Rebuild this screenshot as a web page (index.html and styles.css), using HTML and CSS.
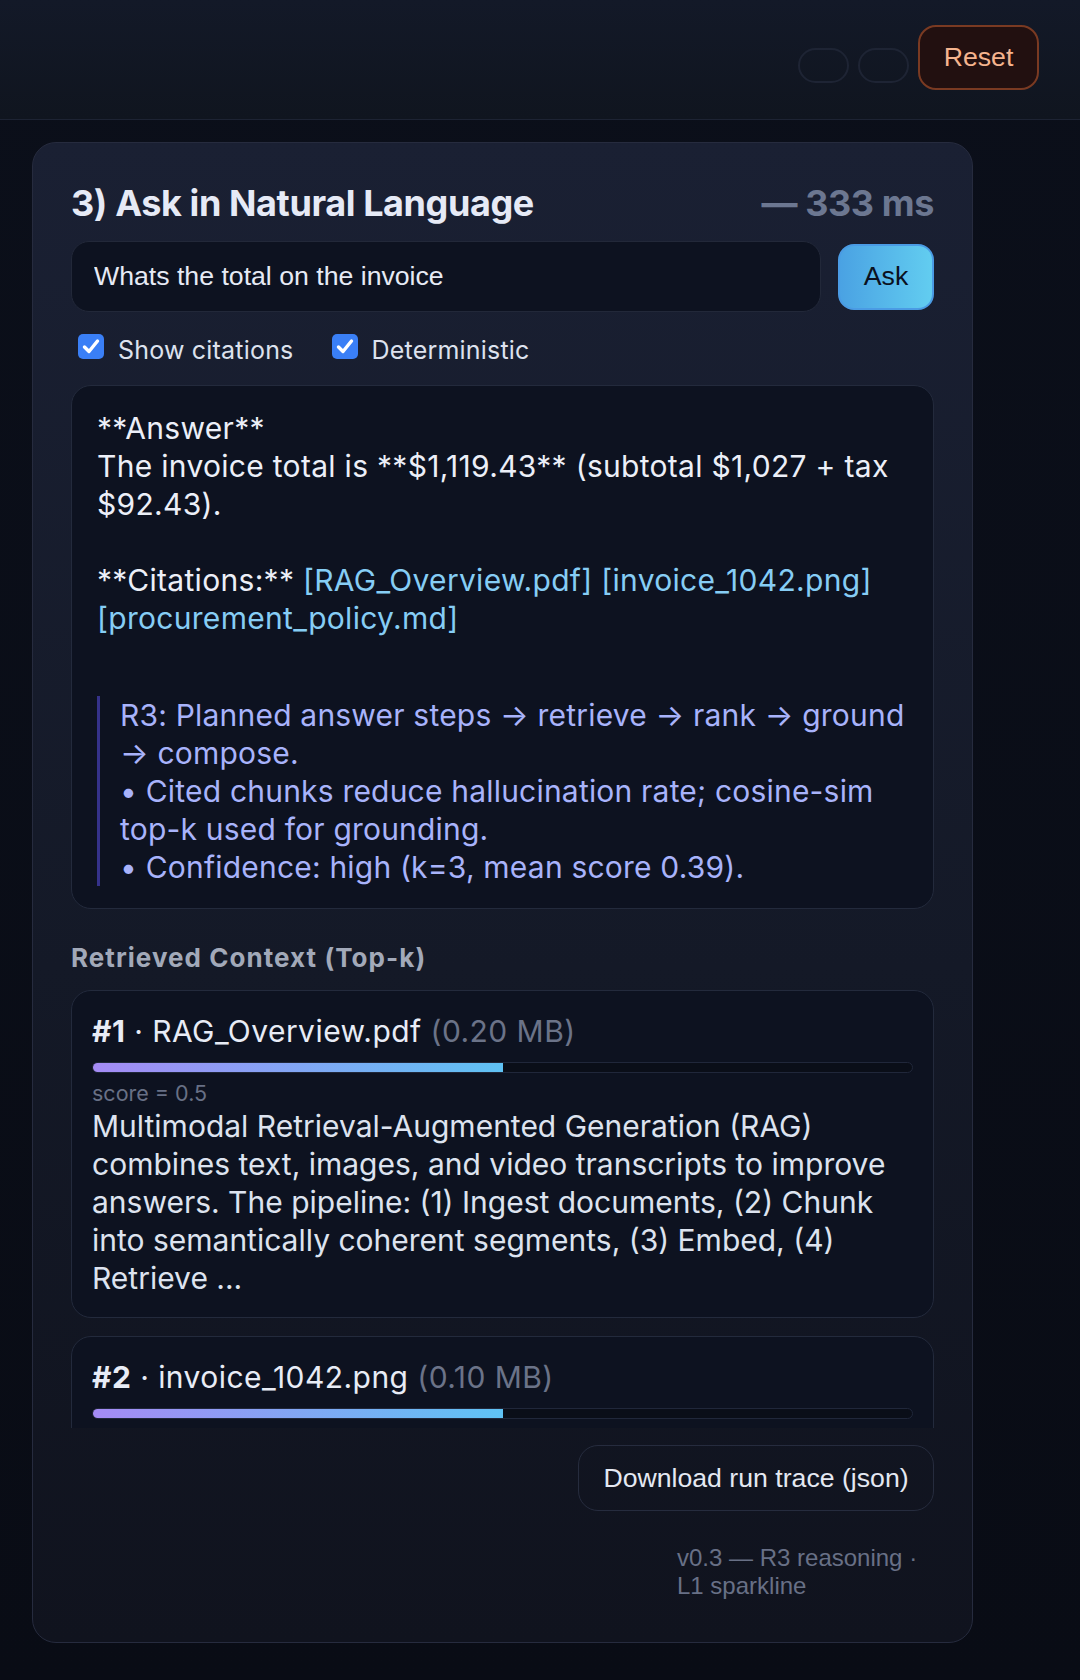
FILE: index.html
```html
<!DOCTYPE html>
<html lang="en">
<head>
<meta charset="utf-8">
<title>Ask in Natural Language</title>
<link rel="stylesheet" href="styles.css">
</head>
<body>
<header class="topbar">
  <button class="pill" aria-label="Option 1"></button>
  <button class="pill" aria-label="Option 2"></button>
  <button class="reset">Reset</button>
</header>
<main class="main">
  <section class="card">
    <div class="title-row">
      <h2 class="title">3) Ask in Natural Language</h2>
      <span class="latency">— 333 ms</span>
    </div>
    <div class="query-row">
      <input class="query-input" type="text" value="Whats the total on the invoice">
      <button class="ask">Ask</button>
    </div>
    <div class="options">
      <label class="opt"><span class="box"><svg viewBox="0 0 26 25" width="26" height="25"><path d="M6.5 13 L11 17.5 L19.5 7" fill="none" stroke="#fff" stroke-width="3.4" stroke-linecap="round" stroke-linejoin="round"/></svg></span>Show citations</label>
      <label class="opt"><span class="box"><svg viewBox="0 0 26 25" width="26" height="25"><path d="M6.5 13 L11 17.5 L19.5 7" fill="none" stroke="#fff" stroke-width="3.4" stroke-linecap="round" stroke-linejoin="round"/></svg></span>Deterministic</label>
    </div>
    <div class="answer">
      <div class="answer-text">**Answer**
The invoice total is **$1,119.43** (subtotal $1,027 + tax $92.43).

**Citations:** <span class="cite">[RAG_Overview.pdf]</span> <span class="cite">[invoice_1042.png]</span> <span class="cite">[procurement_policy.md]</span></div>
      <div class="reasoning">R3: Planned answer steps → retrieve → rank → ground → compose.<br>• Cited chunks reduce hallucination rate; cosine-sim top-k used for grounding.<br>• Confidence: high (k=3, mean score 0.39).</div>
    </div>
    <h3 class="ctx-title">Retrieved Context (Top-k)</h3>
    <div class="ctx-list">
      <article class="chunk">
        <div class="chunk-head"><b>#1</b> · RAG_Overview.pdf <span class="size">(0.20 MB)</span></div>
        <div class="bar"><div class="bar-fill" style="width:50%"></div></div>
        <div class="score">score = 0.5</div>
        <div class="chunk-text">Multimodal Retrieval-Augmented Generation (RAG) combines text, images, and video transcripts to improve answers. The pipeline: (1) Ingest documents, (2) Chunk into semantically coherent segments, (3) Embed, (4) Retrieve ...</div>
      </article>
      <article class="chunk">
        <div class="chunk-head"><b>#2</b> · invoice_1042.png <span class="size">(0.10 MB)</span></div>
        <div class="bar"><div class="bar-fill" style="width:50%"></div></div>
        <div class="score">score = 0.5</div>
        <div class="chunk-text">Invoice #1042 — Subtotal $1,027.00, Tax $92.43, Total $1,119.43.</div>
      </article>
    </div>
    <div class="download-row">
      <button class="download">Download run trace (json)</button>
    </div>
    <p class="footer">v0.3 — R3 reasoning · L1 sparkline</p>
  </section>
</main>
</body>
</html>
```

FILE: styles.css
```css
* { box-sizing: border-box; }
html, body { margin: 0; padding: 0; }
body {
  width: 1080px;
  min-height: 1680px;
  background: linear-gradient(180deg, #0b0f1a 0%, #090c15 100%);
  font-family: Inter, "Noto Sans", sans-serif;
  color: #e6eaf5;
}
.topbar {
  height: 120px;
  border-bottom: 1px solid #1d2333;
  background: linear-gradient(180deg, #131928 0%, #10151f 100%);
  display: flex;
  justify-content: flex-end;
  align-items: flex-start;
  gap: 9px;
  padding: 25px 41px 0 0;
}
.pill {
  margin-top: 23px;
  width: 51px;
  height: 35px;
  border: 2px solid #1e2434;
  border-radius: 18px;
  background: transparent;
}
.reset {
  width: 121px;
  height: 65px;
  border: 2px solid #7a3a22;
  border-radius: 18px;
  background: #221010;
  color: #f5b48e;
  font: 26.67px "Liberation Sans", Arial, sans-serif;
}
.main { padding: 22px 0 0 32px; }
.card {
  width: 941px;
  border: 1px solid #262b3e;
  border-radius: 24px;
  background: linear-gradient(180deg, #1a2033 0%, #141927 55%, #10131e 100%);
  padding: 38px 38px 42px;
}
.title-row {
  display: flex;
  justify-content: space-between;
  align-items: baseline;
}
.title {
  margin: 0;
  font-size: 36px;
  font-weight: 700;
  letter-spacing: -0.4px;
  color: #e6eaf6;
}
.latency {
  font-size: 36px;
  font-weight: 700;
  letter-spacing: -0.4px;
  color: #6c7791;
}
.query-row {
  margin-top: 16px;
  display: flex;
  align-items: center;
  gap: 17px;
}
.query-input {
  flex: 1;
  height: 71px;
  background: #0d1220;
  border: 1px solid #222839;
  border-radius: 18px;
  padding: 0 22px;
  font: 26.67px "Liberation Sans", Arial, sans-serif;
  color: #e6eaf5;
  outline: none;
}
.ask {
  width: 96px;
  height: 66px;
  border: 2px solid #4a9be4;
  border-radius: 16px;
  background: linear-gradient(90deg, #4aa2e3 0%, #62cdf0 100%);
  color: #0a1120;
  font: 26.67px "Liberation Sans", Arial, sans-serif;
}
.options {
  margin-top: 22px;
  display: flex;
  gap: 38px;
  padding-left: 7px;
}
.opt {
  display: flex;
  align-items: baseline;
  gap: 14px;
  font-size: 25px;
  letter-spacing: 0.2px;
  color: #dde2ee;
  line-height: 31px;
}
.box {
  width: 26px;
  height: 25px;
  border-radius: 5px;
  background: #3a7ff6;
  display: flex;
  align-items: center;
  justify-content: center;
  overflow: hidden;
}
.answer {
  margin-top: 19px;
  background: #0d1220;
  border: 1px solid #232a3c;
  border-radius: 20px;
  padding: 23px 25px 22px;
  font-size: 30px;
  line-height: 38px;
  color: #eceff8;
}
.answer-text { white-space: pre-wrap; letter-spacing: 0.3px; }
.cite { color: #86cdf5; }
.reasoning {
  margin-top: 59px;
  border-left: 3px solid #35328a;
  padding-left: 20px;
  color: #a8b3fb;
  letter-spacing: 0.2px;
}
.ctx-title {
  margin: 33px 0 0;
  font-size: 26px;
  font-weight: 700;
  letter-spacing: 1.05px;
  color: #a2a9b9;
}
.ctx-list {
  margin-top: 17px;
  height: 438px;
  overflow: hidden;
  display: flex;
  flex-direction: column;
  gap: 18px;
}
.chunk {
  flex-shrink: 0;
  background: #0d1220;
  border: 1px solid #232a3c;
  border-radius: 20px;
  padding: 21px 20px 20px;
}
.chunk-head {
  font-size: 30px;
  line-height: 38px;
  letter-spacing: 0.45px;
  color: #e8ecf6;
}
.chunk-head b { font-weight: 700; }
.size { color: #6b7388; }
.bar {
  margin-top: 12px;
  height: 11px;
  border: 1px solid #20273a;
  background: #0a0e18;
  border-radius: 6px;
  overflow: hidden;
}
.bar-fill {
  height: 100%;
  background: linear-gradient(90deg, #a58bf5 0%, #5fc2f4 100%);
}
.score {
  margin-top: 8px;
  font-size: 21.5px;
  line-height: 24px;
  color: #687085;
}
.chunk-text {
  margin-top: 2px;
  font-size: 30px;
  line-height: 38px;
  color: #dde3ef;
}
.download-row {
  margin-top: 17px;
  display: flex;
  justify-content: flex-end;
}
.download {
  width: 356px;
  height: 66px;
  border: 1px solid #262c3e;
  border-radius: 20px;
  background: transparent;
  color: #e4e8f2;
  font: 26.67px "Liberation Sans", Arial, sans-serif;
}
.footer {
  margin: 33px 0 0 auto;
  width: 257px;
  font: 24px "Liberation Sans", Arial, sans-serif;
  color: #687086;
}
```
